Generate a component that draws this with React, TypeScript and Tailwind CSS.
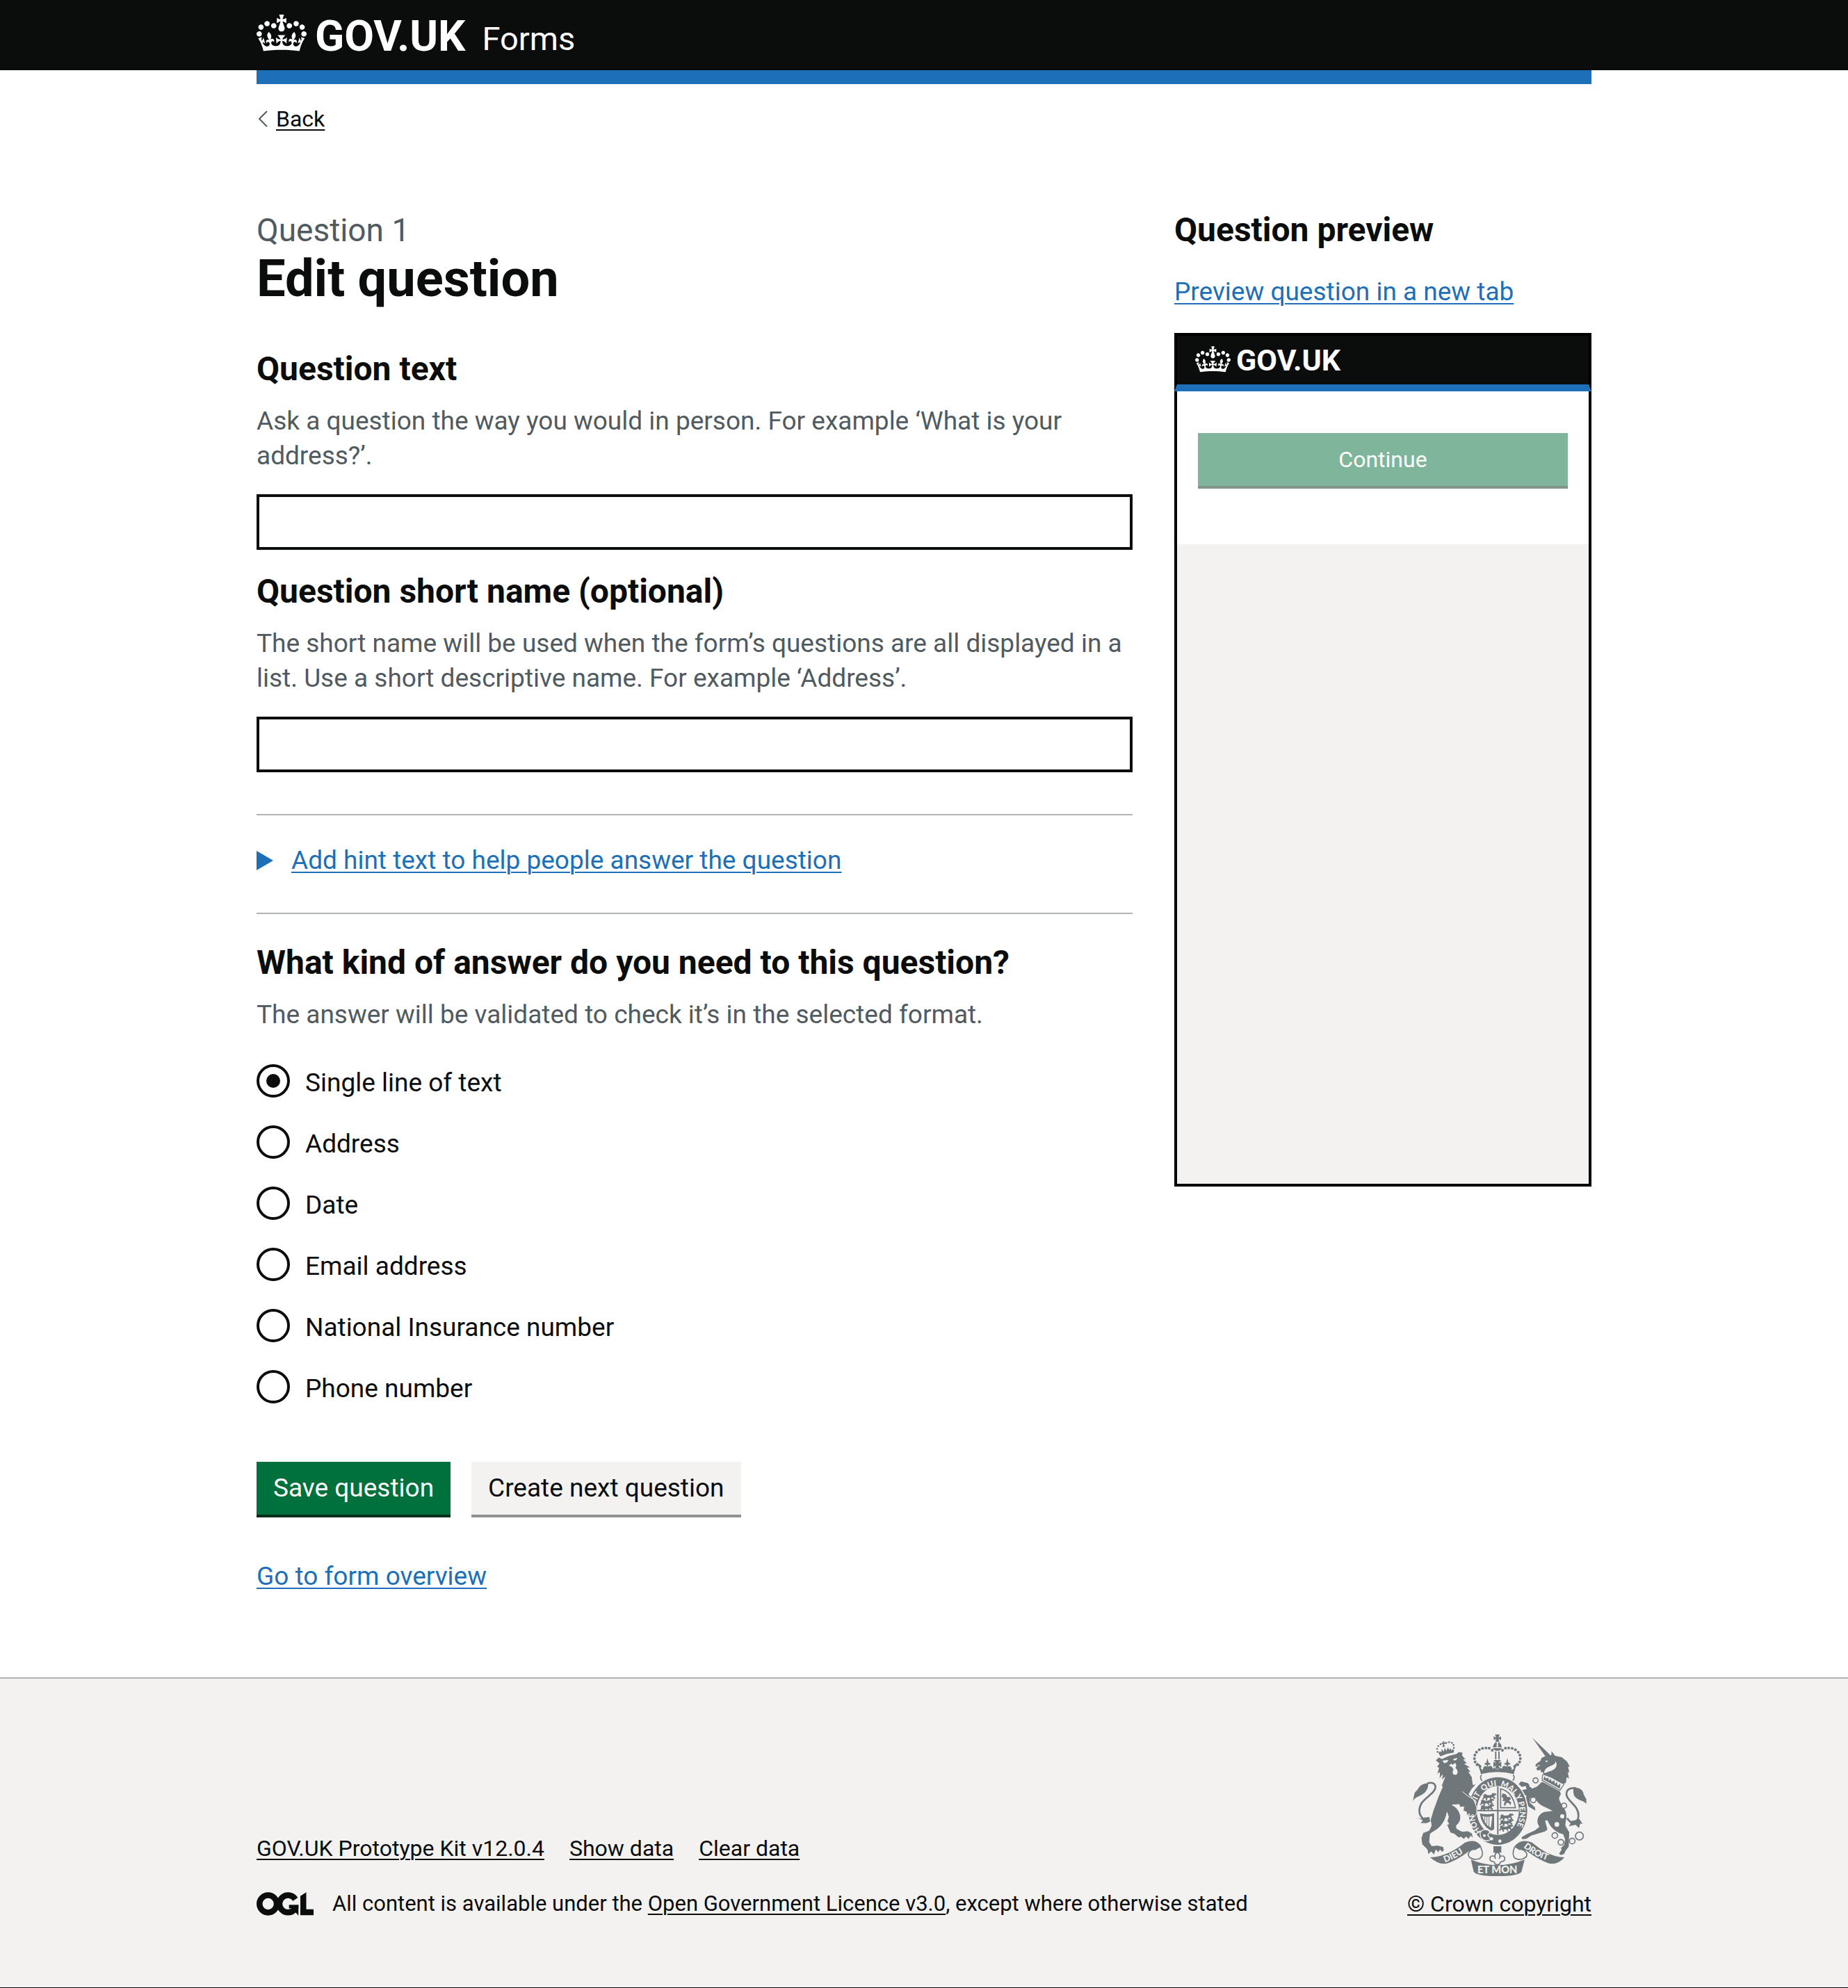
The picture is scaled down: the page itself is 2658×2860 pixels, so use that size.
import { type ReactNode } from "react";

const SANS = "font-['Roboto','Liberation_Sans',sans-serif]";

function Crown({ className }: { className: string }) {
  return (
    <svg aria-hidden="true" className={className} viewBox="0 0 132 97" fill="currentColor">
      <path
        fillRule="evenodd"
        d="M25 30.2c3.5 1.5 7.7-.2 9.1-3.7 1.5-3.6-.2-7.8-3.9-9.2-3.6-1.4-7.6.3-9.1 3.9-1.4 3.5.3 7.5 3.9 9zM9 39.5c3.6 1.5 7.8-.2 9.2-3.7 1.5-3.6-.2-7.8-3.9-9.1-3.6-1.5-7.6.2-9.1 3.8-1.4 3.5.3 7.5 3.8 9zM4.4 57.2c3.5 1.5 7.7-.2 9.1-3.8 1.5-3.6-.2-7.7-3.9-9.1-3.5-1.5-7.6.3-9.1 3.8-1.4 3.5.3 7.6 3.9 9.1zm38.3-21.4c3.5 1.5 7.7-.2 9.1-3.8 1.5-3.6-.2-7.7-3.9-9.1-3.6-1.5-7.6.3-9.1 3.8-1.3 3.6.4 7.7 3.9 9.1zm64.4-5.6c-3.6 1.5-7.8-.2-9.1-3.7-1.5-3.6.2-7.8 3.8-9.2 3.6-1.4 7.7.3 9.2 3.9 1.3 3.5-.4 7.5-3.9 9zm15.9 9.3c-3.6 1.5-7.7-.2-9.1-3.7-1.5-3.6.2-7.8 3.7-9.1 3.6-1.5 7.7.2 9.2 3.8 1.5 3.5-.3 7.5-3.8 9zm4.7 17.7c-3.6 1.5-7.8-.2-9.2-3.8-1.5-3.6.2-7.7 3.9-9.1 3.6-1.5 7.7.3 9.2 3.8 1.3 3.5-.4 7.6-3.9 9.1zM89.3 35.8c-3.6 1.5-7.8-.2-9.2-3.8-1.4-3.6.2-7.7 3.9-9.1 3.6-1.5 7.7.3 9.2 3.8 1.4 3.6-.3 7.7-3.9 9.1zM69.7 17.7l8.9 4.7V9.3l-8.9 2.8c-.2-.3-.5-.6-.9-.9L72.4 0H59.6l3.5 11.2c-.3.3-.6.5-.9.9l-8.8-2.8v13.1l8.8-4.7c.3.3.6.7.9.9l-5 15.4v.1c-.2.8-.4 1.6-.4 2.4 0 4.1 3.1 7.5 7 8.1h.2c.3 0 .7.1 1 .1.4 0 .7 0 1-.1h.2c4-.6 7.1-4.1 7.1-8.1 0-.8-.1-1.7-.4-2.4V34l-5.1-15.4c.4-.2.7-.6 1-.9zM66 92.8c16.9 0 32.8 1.1 47.1 3.2 4-16.9 8.9-26.7 14-33.5l-9.6-3.4c1 4.9 1.1 7.2 0 10.2-1.5-1.4-3-4.3-4.2-8.7L108.6 76c2.8-2 5-3.2 7.5-3.3-4.4 9.4-10 11.9-13.6 11.2-4.3-.8-6.3-4.6-5.6-7.9 1-4.7 5.7-5.9 8-.5 4.3-8.7-3-11.4-7.6-8.8 7.1-7.2 7.9-13.5 2.1-21.1-8 6.1-8.1 12.3-4.5 20.8-4.7-5.4-12.1-2.5-9.5 6.2 3.4-5.2 7.9-2 7.2 3.1-.6 4.3-6.4 7.8-13.5 7.2-10.3-.9-10.9-8-11.2-13.8 2.5-.5 7.1 1.8 11 7.3L80.2 60c-4.1 4.4-8 5.3-12.3 5.4 1.4-4.4 8-11.6 8-11.6H55.5s6.4 7.2 7.9 11.6c-4.2-.1-8-1-12.3-5.4l1.4 16.4c3.9-5.5 8.5-7.7 10.9-7.3-.3 5.8-.9 12.8-11.1 13.8-7.2.6-12.9-2.9-13.5-7.2-.7-5 3.8-8.3 7.1-3.1 2.7-8.7-4.6-11.6-9.4-6.2 3.7-8.5 3.6-14.7-4.6-20.8-5.8 7.6-5 13.9 2.2 21.1-4.7-2.6-11.9.1-7.7 8.8 2.3-5.5 7.1-4.2 8.1.5.7 3.3-1.3 7.1-5.7 7.9-3.5.7-9-1.8-13.5-11.2 2.5.1 4.7 1.3 7.5 3.3l-4.7-15.4c-1.2 4.4-2.7 7.2-4.3 8.7-1.1-3-.9-5.3 0-10.2l-9.5 3.4c5 6.9 9.9 16.7 14 33.5 14.8-2.1 30.8-3.2 47.7-3.2z"
      />
    </svg>
  );
}

/* Open Government Licence mark: two interlocked rings and an angled bar. */
function LicenceMark() {
  return (
    <svg role="img" aria-label="Open Government Licence" className="h-[34px] w-[82px] shrink-0" viewBox="0 0 483 196">
      <g fill="none" stroke="#0b0c0c" strokeWidth="50">
        <circle cx="98" cy="98" r="73" />
        <path d="M329 59A73 73 0 1 0 322 146" />
      </g>
      <g fill="#0b0c0c">
        <rect x="275" y="106" width="80" height="30" />
        <polygon points="299,133 355,106 355,194 352,194" />
        <polygon points="371,32 421,0 421,143 483,143 483,194 371,194" />
      </g>
    </svg>
  );
}

const PEARLS = [
  [412, 144], [399, 135], [385, 134], [370, 136], [356, 142], [344, 152], [337, 165], [335, 180], [338, 194], [346, 206],
];
const SMALL_PEARLS = [
  [176, 151], [174, 138], [179, 126], [189, 118], [214, 112], [226, 109], [238, 112], [245, 121], [246, 134], [241, 144],
];

function Passant({ x, y }: { x: number; y: number }) {
  return (
    <path
      transform={`translate(${x} ${y})`}
      d="M0 4l8-4 6 5 10 1 12-3 3-7 6 2 8 0 4 6-6 2-4-2 2 5-5 2 7 5-1 6-5-1-5-6-5 0-2 5 4 5-7 1-1-8-10-1-4 5 3 5-8 0 0-7-5-2-6 6-5-1 5-7 1-8z"
    />
  );
}

function RoyalArms({ className }: { className: string }) {
  return (
    <svg aria-hidden="true" className={className} viewBox="69 75 750 612" fill="#6f777b">
      {/* imperial crown */}
      <path d="M424 76h20l-5 13 11-5v16l-11-5 4 12h-18l4-12-11 5V84l11 5z" />
      <path d="M415 131c1-12 8-20 16-22v22zM453 131c-1-12-8-20-16-22v22zM414 135h40c-4 7-10 11-20 11s-16-4-20-11z" />
      {PEARLS.map(([x, y]) => (
        <g key={`${x}-${y}`}>
          <circle cx={x} cy={y} r="6" />
          <circle cx={868 - x} cy={y} r="6" />
        </g>
      ))}
      <path d="M424 149h6v34h-6zM438 149h6v34h-6zM418 186h32l-11 14 12-7v24l-12-7 6 14h-22l6-14-12 7v-24l12 7z" />
      <path d="M346 196L366 212L362 222L372 230C370 214 384 208 390 216L387 206L380 206L378 200L386 198L391 178L396 198L404 200L402 206L395 206L392 216C402 208 414 212 414 224L422 218L425 226H443L446 218L454 224C454 212 466 208 476 216L473 206L466 206L464 200L472 198L477 178L482 198L490 200L488 206L481 206L478 216C484 208 498 214 496 230L506 222L502 212L522 196C516 212 508 230 505 247Q434 228 363 247C360 230 352 212 346 196z" />
      <path d="M366 250Q356 262 368 276M502 250Q512 262 500 276" fill="none" stroke="#6f777b" strokeWidth="5" />

      {/* unicorn */}
      <path d="M585 90L662 164L644 174z" />
      <path d="M636 172L654 166L667 165L668 148L683 168L712 174L734 192L746 214L739 216L745 240L738 238L743 266L733 260L730 284L718 290C698 284 670 258 628 250C632 246 634 244 632 240L622 238L620 228L608 232L602 224L608 216L598 212L600 204L620 190L624 178z" />
      <path d="M636 243C636 224 652 216 668 210C680 206 684 200 686 192C694 208 688 220 676 228C662 236 648 238 636 243zM640 188L654 190L646 196zM604 210L622 208L610 214z" fill="#f3f2f1" />
      <path d="M629 250L627 274L704 317L722 290" fill="none" stroke="#6f777b" strokeWidth="4" />
      <path d="M632 270L638 256L644 266L654 262L656 276L664 266L668 280L680 274L682 290L690 280L694 296L706 288L704 310z" />
      <path d="M624 282L632 282L704 322L708 332L700 350C702 372 722 386 730 412C736 440 726 452 728 470L744 498L742 560L728 578L722 592L708 596L700 590L712 572L708 566L722 552L726 528L718 506C690 500 664 480 650 446L640 448L650 486L640 494L580 512L560 526L542 528L538 520L560 506L596 490L616 474C602 456 602 424 636 410L672 406C656 392 620 388 604 362L598 346L574 350L574 370L596 390L598 404L570 388L552 368L560 340L540 334L536 316L560 312L556 298L540 302L526 290L536 278L566 286L584 310L606 300z" />
      <g fill="#f3f2f1">
        <circle cx="579" cy="297" r="7" />
        <circle cx="714" cy="429" r="9" />
        <circle cx="691" cy="464" r="10" />
      </g>
      <g fill="#f3f2f1" stroke="#6f777b" strokeWidth="5">
        <circle cx="599" cy="274" r="11" />
        <circle cx="589" cy="358" r="12" />
        <circle cx="722" cy="383" r="11" />
        <circle cx="682" cy="512" r="12" />
        <circle cx="708" cy="541" r="12" />
        <circle cx="757" cy="536" r="12" />
        <circle cx="788" cy="514" r="17" />
      </g>
      <path d="M736 436C744 460 782 462 784 428C786 380 732 364 732 334C732 312 750 304 774 308" fill="none" stroke="#6f777b" strokeWidth="8" />
      <path d="M762 308C784 300 806 316 806 334L818 356V376C806 360 788 364 770 346C760 334 762 320 762 308zM732 440L752 450L776 444L788 440L802 462L792 460L786 480L772 466L742 472L750 460z" />

      {/* garter and shield */}
      <ellipse cx="436" cy="406" rx="132" ry="150" fill="#f3f2f1" />
      <ellipse cx="436" cy="406" rx="127" ry="146" />
      <ellipse cx="436" cy="404" rx="91" ry="106" fill="#f3f2f1" />
      <path d="M433 300h6v208h-6zM346 401h180v6H346z" />
      <Passant x={374} y={332} />
      <Passant x={364} y={356} />
      <Passant x={364} y={380} />
      <Passant x={448} y={420} />
      <Passant x={448} y={444} />
      <Passant x={446} y={468} />
      <path d="M448 392V310C480 318 504 344 512 392z" fill="none" stroke="#6f777b" strokeWidth="5" />
      <path d="M456 330l14 4 8 12 12 0 2 10-8 4 10 10-4 12-6-10-10-2-4 10-8 4 2-14 4-8-12 2 4-12-8-8z" />
      <path d="M358 416Q390 424 420 416V484Q412 494 402 488Q366 468 358 416zM370 428Q378 462 406 478L412 428Q390 434 370 428z" fillRule="evenodd" />
      <path d="M380 430v20M389 430v32M398 430v42" stroke="#6f777b" strokeWidth="3" />
      <defs>
        <path id="garter-line" d="M364 496A98 116 0 1 1 490 508" />
        <path id="scroll-left" d="M208 628Q262 610 314 566" />
        <path id="scroll-right" d="M546 562Q606 612 672 624" />
      </defs>
      <text fill="#f3f2f1" fontFamily="Lato, sans-serif" fontWeight="900" fontSize="34">
        <textPath href="#garter-line">HONI SOIT&#160; QUI&#160; MAL Y PENSE</textPath>
      </text>
      <path d="M360 508C356 490 386 476 402 496L392 510L406 528C388 542 362 532 360 508z" stroke="#f3f2f1" strokeWidth="4" />
      <g fill="#f3f2f1">
        <circle cx="378" cy="512" r="6" />
        <circle cx="409" cy="526" r="7" />
        <circle cx="445" cy="536" r="7" />
      </g>

      {/* lion */}
      {SMALL_PEARLS.map(([x, y]) => (
        <circle key={`${x}-${y}`} cx={x} cy={y} r="4" />
      ))}
      <path d="M198 106h8l-2 6 6-2v8l-6-2 3 14h-10l3-14-6 2v-8l6 2zM180 156L186 148L192 154L194 138L202 150L207 134L214 146L220 132L226 142L233 136L236 146L247 142L246 154Q214 158 188 170z" />
      <g transform="translate(45 60)">
        <path
          d="M122 128L136 114L150 120Q180 104 214 98L222 90L240 93L239 108L255 125L243 124L260 142L248 143L275 158L260 160L277 180L266 178L280 200L284 232L298 230L280 250L266 274L286 296L300 330L300 356L290 370L282 360L272 372L268 358L256 366L256 350L242 346L244 328L228 330L224 318L194 320C224 334 240 372 224 396L212 410L214 422L236 434L262 432L280 442L286 464L274 454L266 468L254 458L244 468L232 458L222 462L204 446L186 440L170 404L180 402L172 390L178 372L172 352C166 382 156 404 128 426L100 444L96 480L106 496L132 494L156 500L160 516L150 524L142 514L134 526L124 514L116 536L104 522L90 534L86 512L64 490L60 464L68 440L94 430L104 410L100 384L112 344L134 284L152 242L148 236L162 200L148 214L152 190L138 210L140 180L128 188L136 160L127 156L138 141z"
          stroke="#f3f2f1"
          strokeWidth="3"
        />
        <path d="M152 128L178 126L172 136L160 140zM198 122L216 116L212 126L202 128zM180 150L190 142L196 146L208 138L212 150L208 160C222 172 220 190 206 190C194 190 194 176 200 166L192 156z" fill="#f3f2f1" />
        <path d="M238 262L262 282L286 296" fill="none" stroke="#f3f2f1" strokeWidth="3" />
        <path d="M98 388C58 388 40 350 62 312C84 282 124 266 122 240C118 222 100 222 86 228" fill="none" stroke="#6f777b" strokeWidth="8" />
        <path d="M90 228C68 222 50 242 46 252L32 268L24 304C34 284 54 284 72 270C86 258 92 242 90 228zM40 374L60 380L74 374L96 372L98 392L84 398L58 398L68 386z" />
      </g>

      {/* motto scroll */}
      <path d="M144 606C204 604 254 574 294 542Q346 522 366 562L344 574Q324 568 300 588Q262 616 224 630Q186 644 144 606zM724 606C664 604 624 574 584 542Q532 522 506 562L526 574Q544 568 562 580Q608 614 650 630Q690 644 724 606z" />
      <path d="M342 572C318 566 300 592 314 606C326 616 346 618 360 610C374 598 370 578 362 562M526 572C548 566 572 592 556 606C542 616 524 618 510 610C496 598 502 578 508 562" fill="#f3f2f1" stroke="#6f777b" strokeWidth="5" />
      <path d="M320 616Q434 664 552 616L538 668Q526 687 434 687Q344 687 332 668z" />
      <path d="M417 558h34v28h-34z" />
      <path d="M434 582C446 592 448 602 442 612C446 594 466 598 466 612Q466 624 452 624L446 628Q446 638 434 638Q422 638 422 628L416 624Q402 624 402 612C402 598 422 594 426 612C420 602 422 592 434 582z" fill="#f3f2f1" stroke="#6f777b" strokeWidth="5" />
      <g fill="#f3f2f1" fontFamily="Lato, sans-serif" fontWeight="900" fontSize="38">
        <text>
          <textPath href="#scroll-left">DIEU</textPath>
        </text>
        <text x="434" y="676" textAnchor="middle" fontSize="44">
          ET MON
        </text>
        <text>
          <textPath href="#scroll-right">DROIT</textPath>
        </text>
      </g>
    </svg>
  );
}

function Link({ children, className = "" }: { children: ReactNode; className?: string }) {
  return (
    <a href="#" className={`underline decoration-2 underline-offset-4 ${className}`}>
      {children}
    </a>
  );
}

function TextQuestion({ id, label, hint }: { id: string; label: string; hint: string }) {
  return (
    <div className="flex flex-col">
      <label htmlFor={id} className="text-[48px] leading-[60px] font-bold">
        {label}
      </label>
      <p id={`${id}-hint`} className="mt-5 text-[37px] leading-[50px] text-[#505a5f]">
        {hint}
      </p>
      <input
        id={id}
        type="text"
        aria-describedby={`${id}-hint`}
        className="mt-[30px] h-20 w-full border-4 border-[#0b0c0c] bg-white px-2 text-[37px]"
      />
    </div>
  );
}

const ANSWER_TYPES = [
  "Single line of text",
  "Address",
  "Date",
  "Email address",
  "National Insurance number",
  "Phone number",
];

export default function App() {
  return (
    <div className={`flex min-h-screen flex-col bg-white text-[#0b0c0c] ${SANS}`}>
      <header className="bg-[#0b0c0c] text-white">
        <div className="mx-auto flex h-[101px] max-w-[1920px] items-start">
          <a href="#" className="flex items-start">
            <Crown className="mt-[21px] h-[53px] w-[72px]" />
            <span className="ml-3 text-[62px] leading-[104px] font-bold">GOV.UK</span>
          </a>
          <a href="#" className="ml-6 text-[47px] leading-[112px]">
            Forms
          </a>
        </div>
      </header>

      <div className="mx-auto w-full max-w-[1920px]">
        <div className="h-5 bg-[#1d70b8]" />
        <div className="mt-[30px] flex items-center gap-3 text-[32px] leading-10">
          <svg aria-hidden="true" className="h-6 w-4" viewBox="0 0 16 24" fill="none" stroke="#505a5f" strokeWidth="2">
            <path d="M15 1L4 12l11 11" />
          </svg>
          <Link>Back</Link>
        </div>

        <main className="mt-[110px] grid grid-cols-[1260fr_600fr] gap-[60px]">
          <form className="flex flex-col" onSubmit={(e) => e.preventDefault()}>
            <h1 className="text-[74px] leading-20 font-bold">
              <span className="block text-[46px] leading-[60px] font-normal text-[#505a5f]">Question 1</span>
              Edit question
            </h1>
            <div className="mt-[60px] flex flex-col gap-[30px]">
              <TextQuestion
                id="question-text"
                label="Question text"
                hint="Ask a question the way you would in person. For example ‘What is your address?’."
              />
              <TextQuestion
                id="question-short-name"
                label="Question short name (optional)"
                hint="The short name will be used when the form’s questions are all displayed in a list. Use a short descriptive name. For example ‘Address’."
              />
            </div>

            <details className="mt-[60px] border-y-2 border-[#b1b4b6] pt-10 pb-[50px] text-[37px] leading-[50px]">
              <summary className="flex cursor-pointer list-none items-center gap-[26px] text-[#1d70b8]">
                <svg aria-hidden="true" className="h-7 w-6" viewBox="0 0 24 28" fill="currentColor">
                  <path d="M0 0l24 14L0 28z" />
                </svg>
                <span className="underline decoration-2 underline-offset-4">
                  Add hint text to help people answer the question
                </span>
              </summary>
            </details>

            <fieldset className="mt-10">
              <legend className="text-[48px] leading-[60px] font-bold">
                What kind of answer do you need to this question?
              </legend>
              <p className="mt-5 text-[37px] leading-[50px] text-[#505a5f]">
                The answer will be validated to check it’s in the selected format.
              </p>
              <div className="mt-[46px] flex flex-col gap-[34px]">
                {ANSWER_TYPES.map((type, i) => (
                  <label key={type} className="flex items-start gap-[22px] text-[37px] leading-[54px]">
                    <input
                      type="radio"
                      name="answer-type"
                      defaultChecked={i === 0}
                      className="grid size-12 appearance-none place-content-center rounded-full border-4 border-[#0b0c0c] before:size-5 before:rounded-full checked:before:bg-[#0b0c0c]"
                    />
                    {type}
                  </label>
                ))}
              </div>
            </fieldset>

            <div className="mt-[78px] flex gap-[30px] text-[37px]">
              <button type="submit" className="h-[76px] bg-[#00703c] px-6 text-white shadow-[0_4px_0_#002d18]">
                Save question
              </button>
              <button type="button" className="h-[76px] bg-[#f3f2f1] px-6 shadow-[0_4px_0_#929191]">
                Create next question
              </button>
            </div>
            <p className="mt-16 text-[37px] leading-[50px]">
              <Link className="text-[#1d70b8]">Go to form overview</Link>
            </p>
          </form>

          <aside>
            <h2 className="text-[48px] leading-[60px] font-bold">Question preview</h2>
            <p className="mt-[34px] text-[37px] leading-[50px]">
              <Link className="text-[#1d70b8]">Preview question in a new tab</Link>
            </p>
            <div className="mt-[34px] flex h-[1228px] flex-col border-4 border-black bg-[#f3f2f1]">
              <div className="-mx-1 flex h-20 items-start gap-2 border-x-4 border-b-10 border-x-black border-b-[#1d70b8] bg-[#0b0c0c] px-[26px] text-white">
                <Crown className="mt-[15px] h-[38px] w-[51px]" />
                <span className="text-[43px] leading-[70px] font-bold">GOV.UK</span>
              </div>
              <div className="bg-white px-[30px] pt-[60px] pb-[84px]">
                <button
                  type="button"
                  disabled
                  className="block h-[76px] w-full bg-[#7fb59b] text-[32px] text-white shadow-[0_4px_0_#80968b]"
                >
                  Continue
                </button>
              </div>
            </div>
          </aside>
        </main>
      </div>

      <footer className="mt-[120px] flex-1 border-t-2 border-b border-t-[#b1b4b6] border-b-black bg-[#f3f2f1] leading-10">
        <div className="mx-auto flex max-w-[1920px] items-end justify-between pt-20">
          <div>
            <ul className="flex gap-9 text-[32px]">
              <li>
                <Link>GOV.UK Prototype Kit v12.0.4</Link>
              </li>
              <li>
                <Link>Show data</Link>
              </li>
              <li>
                <Link>Clear data</Link>
              </li>
            </ul>
            <div className="mt-10 flex items-center gap-[27px] text-[31px]">
              <LicenceMark />
              <span>
                All content is available under the <Link>Open Government Licence v3.0</Link>, except where otherwise
                stated
              </span>
            </div>
          </div>
          <a
            href="#"
            className="flex flex-col items-center gap-5 text-[32px] underline decoration-2 underline-offset-4"
          >
            <RoyalArms className="h-[204px] w-[250px]" />
            © Crown copyright
          </a>
        </div>
      </footer>
    </div>
  );
}
